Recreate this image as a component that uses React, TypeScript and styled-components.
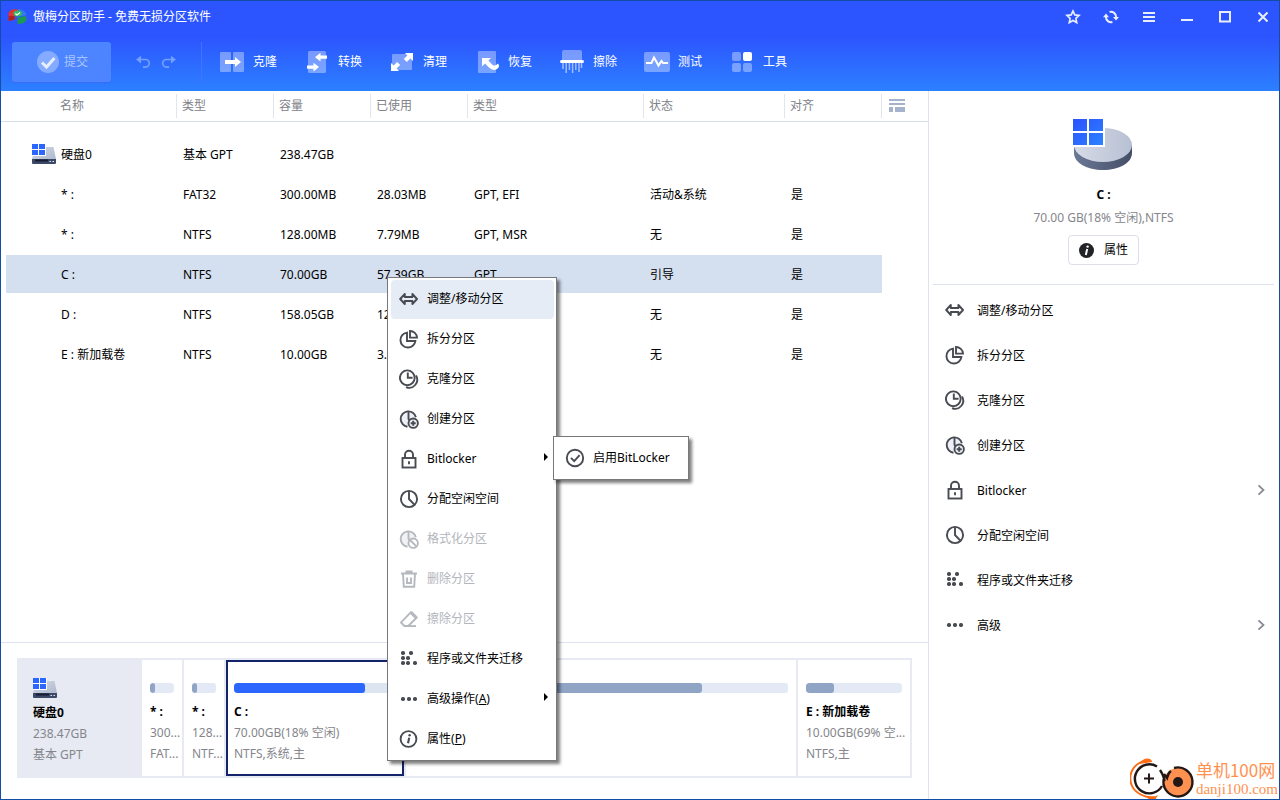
import React from 'react';
import styled, { createGlobalStyle, css } from 'styled-components';

const GlobalStyle = createGlobalStyle`
  *, *::before, *::after { box-sizing: border-box; }
  body {
    margin: 0;
    background: #fff;
    color: #000;
    font: 12px/20px 'Noto Sans', 'Noto Sans CJK SC', sans-serif;
  }
  button {
    margin: 0;
    padding: 0;
    border: 0;
    background: none;
    color: inherit;
    font: inherit;
    text-align: left;
  }
  svg { display: block; flex: none; }
  ul { margin: 0; padding: 0; list-style: none; }
`;

/* ---------- window frame ---------- */

const Window = styled.div`
  position: relative;
  display: flex;
  flex-direction: column;
  min-height: 100vh;
  overflow: hidden;
  border: 1px solid #134ea6;
`;

const Header = styled.header`
  color: #fff;
  background: linear-gradient(#2d55ff 0, #2d55ff 36px, #2c80ff 100%);
`;

const TitleBar = styled.div`
  display: flex;
  align-items: center;
  height: 31px;
  padding: 0 1px 0 7px;
`;

const Title = styled.h1`
  flex: 1;
  margin: 0 0 0 6px;
  font-size: 12px;
  font-weight: 400;
`;

const WindowButtons = styled.div`
  display: flex;
  gap: 8px;
`;

const WindowButton = styled.button`
  display: flex;
  align-items: center;
  justify-content: center;
  width: 30px;
  height: 30px;
`;

const Toolbar = styled.nav`
  display: flex;
  align-items: center;
  height: 59px;
  padding: 0 11px;
`;

const SubmitButton = styled.button`
  display: flex;
  align-items: center;
  gap: 5px;
  width: 99px;
  height: 40px;
  padding-left: 25px;
  border-radius: 3px;
  background: #4d84ff;
  color: #aac5ff;
  box-shadow: 0 1px 1px #3b6cf5;
`;

const History = styled.div`
  display: flex;
  gap: 10px;
  padding: 0 24px;
`;

const HistoryButton = styled.button`
  width: 16px;
  height: 16px;
`;

const ToolList = styled.div`
  display: flex;
  align-items: center;
  height: 40px;
  padding-left: 17px;
  border-left: 1px solid #3f74ff;
`;

const ToolButton = styled.button`
  display: flex;
  align-items: center;
  gap: 8px;
  width: 85px;
  height: 40px;
`;

const Body = styled.div`
  display: grid;
  flex: 1;
  grid-template-columns: minmax(0, 1fr) 351px;
`;

/* ---------- partition table ---------- */

const Main = styled.main`
  display: flex;
  flex-direction: column;
`;

const TableArea = styled.div`
  flex: 1;
`;

const Table = styled.table`
  width: 100%;
  table-layout: fixed;
  border-spacing: 0;

  tbody::before {
    content: '';
    display: block;
    height: 12px;
  }
`;

const Col = styled.col<{ $width?: number }>`
  ${(p) => p.$width && `width: ${p.$width}px;`}
`;

const HeadCell = styled.th`
  height: 31px;
  padding: 0 0 1px;
  border-bottom: 1px solid #d8dfea;
  color: #808289;
  font-weight: 400;
  text-align: left;
`;

const HeadLabel = styled.div<{ $indent: number }>`
  height: 24px;
  padding-left: ${(p) => p.$indent}px;
  border-right: 1px solid #e1e5f0;
  line-height: 24px;
`;

const ColumnsButton = styled.button`
  display: flex;
  align-items: center;
  height: 24px;
  padding-left: 7px;
`;

const Row = styled.tr<{ $selected?: boolean }>`
  td:not(:last-child) {
    background: ${(p) => (p.$selected ? '#d4dfef' : 'transparent')};
    background-clip: padding-box;
  }
`;

const Cell = styled.td`
  height: 40px;
  padding: 2px 0 0 6px;
  border: 0 solid transparent;
  border-width: 1px 0;
  white-space: nowrap;

  &:first-child { border-left-width: 5px; padding-left: 26px; }
`;

const NameBox = styled.div`
  display: flex;
  align-items: center;
  gap: 5px;
`;

const IconSlot = styled.span`
  width: 24px;
  margin-bottom: 2px;
`;

/* ---------- disk map ---------- */

const DiskArea = styled.section`
  padding: 15px 16px 21px;
  border-top: 1px solid #dfe3f0;
`;

const DiskMap = styled.div`
  display: flex;
  height: 120px;
  padding: 2px;
  background: #e7eaf2;
`;

const DiskInfo = styled.div`
  display: flex;
  flex-direction: column;
  align-items: flex-start;
  width: 123px;
  padding: 18px 14px 0;

  svg { margin-bottom: 4px; }
`;

const Partitions = styled.div`
  display: grid;
  flex: 1;
  grid-template-columns: 40px 40px 178fr 390fr 112fr;
  gap: 2px;
`;

const Partition = styled.button<{ $selected?: boolean }>`
  display: flex;
  flex-direction: column;
  min-width: 0;
  padding: 23px 0 0 8px;
  background: #fff;
  box-shadow: ${(p) => (p.$selected ? 'inset 0 0 0 2px #14246b' : 'none')};
`;

const Usage = styled.span<{ $selected?: boolean }>`
  display: block;
  align-self: stretch;
  height: 10px;
  margin: 0 8px 8px 0;
  overflow: hidden;
  border-radius: 3px;
  background: ${(p) => (p.$selected ? '#dde5f1' : '#e4eaf5')};
`;

const UsageFill = styled.span<{ $selected?: boolean }>`
  display: block;
  height: 10px;
  border-radius: 3px;
  background: ${(p) => (p.$selected ? '#2a66ff' : '#90a5c6')};
`;

const line = css`
  display: block;
  line-height: 21px;
  white-space: nowrap;
`;

const BoldLine = styled.strong`
  ${line}
`;

const MutedLine = styled.span`
  ${line}
  color: #84868c;
`;

/* ---------- side panel ---------- */

const Side = styled.aside`
  padding: 0 5px 0 4px;
  border-left: 1px solid #dfe3f0;
`;

const Summary = styled.section`
  display: flex;
  flex-direction: column;
  align-items: center;
  height: 194px;
  padding-top: 28px;
  border-bottom: 1px solid #dfe3f0;
`;

const SummaryName = styled.strong`
  margin-top: 12px;
  line-height: 23px;
`;

const SummaryText = styled.span`
  color: #84868c;
  line-height: 23px;
`;

const PropertiesButton = styled.button`
  display: flex;
  align-items: center;
  gap: 10px;
  height: 30px;
  margin-top: 6px;
  padding: 0 10px;
  border: 1px solid #dcdfea;
  border-radius: 4px;
`;

const SideList = styled.ul`
  padding: 3px 0;
`;

const Label = styled.span`
  flex: 1;
`;

const SideItem = styled.button`
  display: flex;
  align-items: center;
  gap: 12px;
  width: 100%;
  height: 44px;
  margin-bottom: 1px;
  padding: 0 7px 0 12px;

  ${Label} { padding-top: 2px; }
`;

/* ---------- context menu ---------- */

const popup = css`
  position: absolute;
  border: 1px solid #77787c;
  background: #fff;
  box-shadow: 3px 3px 3px rgba(0, 0, 0, 0.5);
`;

const ContextMenu = styled.ul`
  ${popup}
  top: 276px;
  left: 386px;
  width: 170px;
  padding: 1px 2px 1px 3px;
`;

const MenuRow = styled.li`
  position: relative;
`;

const MenuItem = styled.button<{ $active?: boolean }>`
  display: flex;
  align-items: center;
  gap: 8px;
  width: 100%;
  height: 39px;
  margin-top: 1px;
  padding: 0 5px 2px 8px;
  border-radius: 4px;
  background: ${(p) => (p.$active ? '#e5ecf6' : 'transparent')};

  &:disabled { color: #b2b5bc; }
`;

const SubMenu = styled.ul`
  ${popup}
  top: -4px;
  left: 162px;
  width: 136px;
  padding: 1px 2px 1px 3px;
`;

/* ---------- watermark ---------- */

const Watermark = styled.div`
  position: absolute;
  right: 1px;
  bottom: -1px;
  display: flex;
  align-items: center;
  color: #ff9150;
`;

const WatermarkName = styled.div`
  font: 17px/20px 'Noto Sans CJK SC', sans-serif;
`;

const WatermarkUrl = styled.div`
  font: 15px/18px 'Liberation Serif', serif;
`;

/* ---------- icons ---------- */

const INK = '#484b52';
const FADED = '#b5b8bf';

type IconName =
  | 'resize' | 'split' | 'clone' | 'create' | 'lock' | 'allocate' | 'format'
  | 'trash' | 'eraser' | 'apps' | 'more' | 'info' | 'check';

function dots(points: number[][], color: string) {
  return points.map(([x, y]) => (
    <rect key={`${x}-${y}`} x={x} y={y} width="4" height="4" rx="1.7" fill={color} stroke="none" />
  ));
}

function MenuIcon({ name, color = INK }: { name: IconName; color?: string }) {
  const shapes: Record<IconName, React.ReactNode> = {
    resize: <path d="M5.8 5 1.2 10l4.6 5v-3h7.6v3l4.6-5-4.6-5v3H5.8z" strokeLinejoin="round" />,
    split: (
      <>
        <path d="M8 3.6a7.5 7.5 0 1 0 8.4 8.4H8z" />
        <path d="M11 2v6.6h7A7 7 0 0 0 11 2z" />
      </>
    ),
    clone: (
      <>
        <circle cx="8.3" cy="8.8" r="7.4" />
        <path d="M8.8 3.5v5.3h4.8" />
        <path d="M17 6.6a8 8 0 0 1-10 11.5" />
      </>
    ),
    create: (
      <>
        <path d="M16.9 8.3a7.7 7.7 0 1 0-8.4 9.4" fill="#edf0f7" />
        <path d="M9.5 2.2v7.6l1.6 1.7" />
        <circle cx="14.2" cy="14.2" r="4.7" fill="#edf0f7" />
        <path d="M14.2 11.7v5M11.7 14.2h5" />
      </>
    ),
    lock: (
      <>
        <rect x="3.5" y="9" width="13" height="9.5" />
        <path d="M6 9V5.7a4 4 0 0 1 8 0V9M10 12.3v3" />
      </>
    ),
    allocate: (
      <>
        <circle cx="10" cy="10" r="8.1" />
        <path d="M10 2.2V10l5.4 5.6" />
      </>
    ),
    format: (
      <>
        <path d="M16.9 8.3a7.7 7.7 0 1 0-8.4 9.4" fill="#f1f2f5" />
        <path d="M9.5 2.2v7.6l1.6 1.7" />
        <circle cx="14.2" cy="14.2" r="4.7" fill="#fff" />
        <path d="m11 11 6.4 6.4" />
      </>
    ),
    trash: <path d="M2 4.5h16M6.5 2.5h7M4 5l.8 12.8h10.4L16 5M8 8.5V14h4V8.5" />,
    eraser: (
      <>
        <path d="M12 3.2 17.6 8.8 9.2 17H5.4L2 13.4z" />
        <path d="M9.2 17.1H17" />
        <path d="m12.2 3.6 5.2 5.2" strokeWidth="3.2" />
      </>
    ),
    apps: dots([[2, 2], [10, 2], [2, 7], [7, 7], [2, 12], [7, 12], [14, 12]], color),
    more: dots([[2, 8], [8, 8], [14, 8]], color),
    info: (
      <>
        <circle cx="9.5" cy="10" r="7.9" />
        <path d="m10.2 8.8-1.2 5.4" strokeWidth="2.1" />
        <circle cx="10.6" cy="6.2" r="1.2" fill={color} stroke="none" />
      </>
    ),
    check: (
      <>
        <circle cx="10" cy="10" r="8.2" />
        <path d="m6 9.8 3.2 3.4 5.4-6" />
      </>
    ),
  };
  return (
    <svg width="20" height="20" viewBox="0 0 20 20" fill="none" stroke={color} strokeWidth="1.9" aria-hidden="true">
      {shapes[name]}
    </svg>
  );
}

const Chevron = () => (
  <svg width="12" height="14" viewBox="0 0 12 14" fill="none" stroke="#888b94" strokeWidth="1.8">
    <path d="m3.5 2.3 5 4.7-5 4.7" />
  </svg>
);

const SubArrow = () => (
  <svg width="5" height="12" viewBox="0 0 5 12"><path d="M0 0v8l4-4z" fill="#000" /></svg>
);

const AppLogo = () => (
  <svg width="19" height="17" viewBox="0 0 19 17">
    <path d="M9.5 1.5C4 .8.5 3 .5 6.500l.3 6.500 6-1.500V8L11 6.500z" fill="#e2322f" />
    <path d="M.6 8v5l6.200-1.600V8z" fill="#b5201f" />
    <path d="M10 1.300c4.500 0 8 2.200 8.300 6L13 8.200 9 5z" fill="#2f7de8" />
    <path d="M9.500 9.500 18.300 8v4.500c-2 2.500-5 3.600-8.800 3.500z" fill="#1c9a52" />
    <ellipse cx="9.6" cy="5.6" rx="4.3" ry="3" fill="#35b764" />
    <path d="m7.3 5.5 1.7 1.5 3-2.5" stroke="#fff" strokeWidth="1.2" fill="none" />
  </svg>
);

const DiskIcon = ({ id }: { id: string }) => (
  <svg width="24" height="20" viewBox="0 0 24 20">
    <defs>
      <linearGradient id={id} x1="0" y1="0" x2="1" y2="1">
        <stop offset="0" stopColor="#d5dae6" />
        <stop offset="1" stopColor="#aeb8cd" />
      </linearGradient>
    </defs>
    <path d="M3 3h18.5L24 15H0z" fill={`url(#${id})`} />
    <path d="M0 15h24v4q0 1-1 1H1q-1 0-1-1z" fill="#3b4866" />
    <path d="M3 16.5h13" stroke="#161d30" strokeWidth="2" />
    <path d="M17.5 17.5H19M20.5 17.5H22" stroke="#dfe6f5" />
    <path d="M0 0h14v12H0z" fill="#fff" />
    <path d="M0 0h6v5H0zM7 0h6v5H7zM0 6h6v5H0zM7 6h6v5H7z" fill="#2a66ff" />
  </svg>
);

const VolumeIcon = () => (
  <svg width="62" height="52" viewBox="0 0 62 52">
    <defs>
      <linearGradient id="volumeTop">
        <stop offset="0" stopColor="#d6dbe7" />
        <stop offset="1" stopColor="#b7c0d3" />
      </linearGradient>
      <linearGradient id="volumeSide">
        <stop offset="0" stopColor="#6b7896" />
        <stop offset="1" stopColor="#454e66" />
      </linearGradient>
      <linearGradient id="volumeTiles" x1="0" y1="0" x2="1" y2="1">
        <stop offset="0" stopColor="#2c52ff" />
        <stop offset="1" stopColor="#2b83ff" />
      </linearGradient>
    </defs>
    <path d="M1 26v8c0 10 13 17 29 17s29-7 29-17v-8z" fill="url(#volumeSide)" />
    <ellipse cx="30" cy="26" rx="29" ry="17" fill="url(#volumeTop)" />
    <path d="M0 0h32v28H0z" fill="#fff" />
    <path d="M0 0h14v12H0zM16 0h14v12H16zM0 14h14v12H0zM16 14h14v12H16z" fill="url(#volumeTiles)" />
  </svg>
);

const PANE = 'rgba(255,255,255,.36)';

const toolIcons: Record<string, React.ReactNode> = {
  clone: (
    <>
      <rect x="1" y="4" width="11" height="20" rx="1.2" fill={PANE} />
      <rect x="14" y="4" width="11" height="20" rx="1.2" fill={PANE} />
      <path d="M6 12h10V9l6 5-6 5v-3H6z" fill="#fff" />
    </>
  ),
  convert: (
    <>
      <rect x="4" y="3" width="18" height="22" rx="1.5" fill={PANE} />
      <path d="M23 7.5h-6.5V4.8L11 9.2l5.5 4.4v-2.8H23zM3 17.4h6.5v-2.7l5.5 4.400-5.500 4.400v-2.800H3z" fill="#fff" />
    </>
  ),
  clean: (
    <>
      <rect x="3" y="6" width="20" height="16" rx="1" fill={PANE} />
      <path d="M16 5h8v8l-2.6-2.6-3.6 3.6-3-3 3.6-3.6zM2 15l2.6 2.6L8.2 14l3 3-3.6 3.6L10 23H2z" fill="#fff" />
    </>
  ),
  restore: (
    <>
      <rect x="4" y="3" width="18" height="22" rx="1" fill={PANE} />
      <path d="M8 10h9l-2.6 2.6 4.2 4.4q2.6 1.5 5.4-1.5 2.5 3-1 5.5-4 2.5-8-1.5l-4-4L8 18.5z" fill="#fff" />
    </>
  ),
  wipe: (
    <>
      <path d="M3 12V4q0-2 2-2h16q2 0 2 2v8z" fill={PANE} />
      <rect x="1" y="12" width="24" height="3" rx="1.5" fill="#fff" />
      <path d="M4 15v6M7.200 15v10M10.400 15v7M13.600 15v10M16.800 15v7M20 15v9M22.500 15v5" stroke="rgba(255,255,255,.55)" strokeWidth="1.5" />
    </>
  ),
  test: (
    <>
      <rect x="0" y="4" width="26" height="20" rx="2" fill={PANE} />
      <path d="M2 15h5.500L10 9.500l4.500 8 3-4.500 1.500 2h5" stroke="#fff" strokeWidth="2" fill="none" />
    </>
  ),
  tools: (
    <>
      <rect x="3" y="4" width="9" height="9" rx="2" fill={PANE} />
      <rect x="14" y="4" width="9" height="9" rx="2" fill="#fff" />
      <rect x="3" y="15" width="9" height="9" rx="2" fill={PANE} />
      <rect x="14" y="15" width="9" height="9" rx="2" fill={PANE} />
    </>
  ),
};

const HistoryIcon = ({ redo }: { redo?: boolean }) => (
  <svg width="16" height="16" viewBox="0 0 16 16">
    <g transform={redo ? 'matrix(-1 0 0 1 16 0)' : undefined}>
      <path d="M5 5.5h5.500a3.800 3.800 0 0 1 0 7.600H8" stroke="#759fff" strokeWidth="1.7" fill="none" />
      <path d="M6 1.800v7.600L1 5.600z" fill="#759fff" />
    </g>
  </svg>
);

const windowIcons: [string, React.ReactNode][] = [
  ['收藏', <path key="i" d="m8 2 1.800 3.900 4.200.5-3.100 2.900.8 4.200L8 11.400l-3.700 2.100.8-4.200L2 6.400l4.200-.5z" strokeWidth="1.7" />],
  ['刷新', (
    <g key="i">
      <path d="M6.600 3a5.200 5.200 0 0 1 6.500 5M9.400 13a5.200 5.200 0 0 1-6.500-5" />
      <path d="M10 8h6l-3 3.600zM0 8.200h6L3 4.600z" fill="#e8eeff" stroke="none" />
    </g>
  )],
  ['菜单', <path key="i" d="M2 4h12M2 8h12M2 12h12" />],
  ['最小化', <path key="i" d="M2 11h12" />],
  ['最大化', <rect key="i" x="3" y="3" width="10" height="9.500" />],
  ['关闭', <path key="i" d="m3.500 3.500 9 9M12.500 3.500l-9 9" />],
];

const WatermarkLogo = () => (
  <svg width="66" height="42" viewBox="0 0 66 42">
    <path d="M20 3A17.500 17.500 0 0 0 9 35.500q6 4 16 4" fill="none" stroke="#ff6c12" strokeWidth="2" />
    <path d="M9 6q3-5 8-5.500 5 0 5 3.500zM15 38q9 2 13-1l-3 5h-5z" fill="#ff6c12" />
    <path d="M27 8.500A14.500 14.500 0 1 0 32 28" fill="none" stroke="#231815" strokeWidth="2.4" />
    <path d="M19 15.500v10M14 20.500h10" stroke="#231815" strokeWidth="2" />
    <circle cx="48" cy="24" r="14" fill="#ff9150" />
    <path d="M44 10a14.500 14.500 0 1 1-10 10M30 12q4 6 4.500 11M34 16l3 4q1-5 4-7" fill="none" stroke="#231815" strokeWidth="2.4" />
    <circle cx="48" cy="24" r="5" fill="#231815" />
  </svg>
);

/* ---------- data ---------- */

const tools: [string, string][] = [
  ['clone', '克隆'], ['convert', '转换'], ['clean', '清理'], ['restore', '恢复'],
  ['wipe', '擦除'], ['test', '测试'], ['tools', '工具'],
];

const columns: { label: string; width: number }[] = [
  { label: '名称', width: 176 },
  { label: '类型', width: 97 },
  { label: '容量', width: 97 },
  { label: '已使用', width: 97 },
  { label: '类型', width: 176 },
  { label: '状态', width: 141 },
  { label: '对齐', width: 97 },
];

const rows: string[][] = [
  ['硬盘0', '基本 GPT', '238.47GB', '', '', '', ''],
  ['* :', 'FAT32', '300.00MB', '28.03MB', 'GPT, EFI', '活动&系统', '是'],
  ['* :', 'NTFS', '128.00MB', '7.79MB', 'GPT, MSR', '无', '是'],
  ['C :', 'NTFS', '70.00GB', '57.39GB', 'GPT', '引导', '是'],
  ['D :', 'NTFS', '158.05GB', '121.51GB', 'GPT', '无', '是'],
  ['E : 新加载卷', 'NTFS', '10.00GB', '3.10GB', 'GPT', '无', '是'],
];

const partitions: { name: string; size?: string; kind?: string; used: string; selected?: boolean }[] = [
  { name: '* :', size: '300...', kind: 'FAT...', used: '22%' },
  { name: '* :', size: '128...', kind: 'NTF...', used: '22%' },
  { name: 'C :', size: '70.00GB(18% 空闲)', kind: 'NTFS,系统,主', used: '81%', selected: true },
  { name: 'D :', used: '77%' },
  { name: 'E : 新加载卷', size: '10.00GB(69% 空...', kind: 'NTFS,主', used: '29%' },
];

const sideItems: { icon: IconName; label: string; more?: boolean }[] = [
  { icon: 'resize', label: '调整/移动分区' },
  { icon: 'split', label: '拆分分区' },
  { icon: 'clone', label: '克隆分区' },
  { icon: 'create', label: '创建分区' },
  { icon: 'lock', label: 'Bitlocker', more: true },
  { icon: 'allocate', label: '分配空闲空间' },
  { icon: 'apps', label: '程序或文件夹迁移' },
  { icon: 'more', label: '高级', more: true },
];

const menuItems: {
  icon: IconName; label: string; accel?: string; disabled?: boolean; arrow?: boolean; sub?: string;
}[] = [
  { icon: 'resize', label: '调整/移动分区' },
  { icon: 'split', label: '拆分分区' },
  { icon: 'clone', label: '克隆分区' },
  { icon: 'create', label: '创建分区' },
  { icon: 'lock', label: 'Bitlocker', arrow: true, sub: '启用BitLocker' },
  { icon: 'allocate', label: '分配空闲空间' },
  { icon: 'format', label: '格式化分区', disabled: true },
  { icon: 'trash', label: '删除分区', disabled: true },
  { icon: 'eraser', label: '擦除分区', disabled: true },
  { icon: 'apps', label: '程序或文件夹迁移' },
  { icon: 'more', label: '高级操作', accel: 'A', arrow: true },
  { icon: 'info', label: '属性', accel: 'P' },
];

/* ---------- page ---------- */

export default function App() {
  return (
    <>
      <GlobalStyle />
      <Window>
        <Header>
          <TitleBar>
            <AppLogo />
            <Title>傲梅分区助手 - 免费无损分区软件</Title>
            <WindowButtons>
              {windowIcons.map(([label, shape]) => (
                <WindowButton key={label} aria-label={label}>
                  <svg width="16" height="16" viewBox="0 0 16 16" fill="none" stroke="#e8eeff" strokeWidth="2">
                    {shape}
                  </svg>
                </WindowButton>
              ))}
            </WindowButtons>
          </TitleBar>
          <Toolbar>
            <SubmitButton disabled>
              <svg width="22" height="22" viewBox="0 0 22 22">
                <circle cx="11" cy="11" r="11" fill="#84abff" />
                <path d="m5 11.500 4.500 4.500 8-9" stroke="#e6eeff" strokeWidth="3" fill="none" />
              </svg>
              提交
            </SubmitButton>
            <History>
              <HistoryButton aria-label="撤销" disabled><HistoryIcon /></HistoryButton>
              <HistoryButton aria-label="重做" disabled><HistoryIcon redo /></HistoryButton>
            </History>
            <ToolList>
              {tools.map(([icon, label]) => (
                <ToolButton key={icon}>
                  <svg width="26" height="28" viewBox="0 0 26 28">{toolIcons[icon]}</svg>
                  {label}
                </ToolButton>
              ))}
            </ToolList>
          </Toolbar>
        </Header>

        <Body>
          <Main>
            <TableArea>
              <Table>
                <colgroup>
                  {columns.map((c, i) => <Col key={i} $width={c.width} />)}
                  <Col />
                </colgroup>
                <thead>
                  <tr>
                    {columns.map((c, i) => (
                      <HeadCell key={i}>
                        <HeadLabel $indent={i === 0 ? 59 : 5}>{c.label}</HeadLabel>
                      </HeadCell>
                    ))}
                    <HeadCell>
                      <ColumnsButton aria-label="列设置">
                        <svg width="16" height="14" viewBox="0 0 16 14" fill="#a5b4cc">
                          <path d="M0 0h16v2H0zM0 4h16v2H0zM0 8h4v5H0zM6 8h10v5H6z" />
                        </svg>
                      </ColumnsButton>
                    </HeadCell>
                  </tr>
                </thead>
                <tbody>
                  {rows.map((cells, r) => (
                    <Row key={r} $selected={r === 3}>
                      {cells.map((text, c) => (
                        <Cell key={c}>
                          {c === 0 ? (
                            <NameBox>
                              <IconSlot>{r === 0 && <DiskIcon id="tableDisk" />}</IconSlot>
                              {text}
                            </NameBox>
                          ) : text}
                        </Cell>
                      ))}
                      <Cell />
                    </Row>
                  ))}
                </tbody>
              </Table>
            </TableArea>

            <DiskArea>
              <DiskMap>
                <DiskInfo>
                  <DiskIcon id="mapDisk" />
                  <BoldLine>硬盘0</BoldLine>
                  <MutedLine>238.47GB</MutedLine>
                  <MutedLine>基本 GPT</MutedLine>
                </DiskInfo>
                <Partitions>
                  {partitions.map((p, i) => (
                    <Partition key={i} $selected={p.selected}>
                      <Usage $selected={p.selected}>
                        <UsageFill $selected={p.selected} style={{ width: p.used }} />
                      </Usage>
                      <BoldLine>{p.name}</BoldLine>
                      {p.size && <MutedLine>{p.size}</MutedLine>}
                      {p.kind && <MutedLine>{p.kind}</MutedLine>}
                    </Partition>
                  ))}
                </Partitions>
              </DiskMap>
            </DiskArea>
          </Main>

          <Side>
            <Summary>
              <VolumeIcon />
              <SummaryName>C :</SummaryName>
              <SummaryText>70.00 GB(18% 空闲),NTFS</SummaryText>
              <PropertiesButton>
                <svg width="15" height="15" viewBox="0 0 15 15">
                  <circle cx="7.5" cy="7.5" r="7.5" fill="#222327" />
                  <path d="m8.200 6-1.400 6" stroke="#fff" strokeWidth="2" />
                  <circle cx="8.6" cy="3.6" r="1.2" fill="#fff" />
                </svg>
                属性
              </PropertiesButton>
            </Summary>
            <SideList>
              {sideItems.map((item) => (
                <li key={item.label}>
                  <SideItem>
                    <MenuIcon name={item.icon} />
                    <Label>{item.label}</Label>
                    {item.more && <Chevron />}
                  </SideItem>
                </li>
              ))}
            </SideList>
          </Side>
        </Body>

        <ContextMenu>
          {menuItems.map((item, i) => (
            <MenuRow key={item.label}>
              <MenuItem $active={i === 0} disabled={item.disabled}>
                <MenuIcon name={item.icon} color={item.disabled ? FADED : INK} />
                <Label>
                  {item.label}
                  {item.accel && <>(<u>{item.accel}</u>)</>}
                </Label>
                {item.arrow && <SubArrow />}
              </MenuItem>
              {item.sub && (
                <SubMenu>
                  <MenuRow>
                    <MenuItem>
                      <MenuIcon name="check" />
                      <Label>{item.sub}</Label>
                    </MenuItem>
                  </MenuRow>
                </SubMenu>
              )}
            </MenuRow>
          ))}
        </ContextMenu>

        <Watermark>
          <WatermarkLogo />
          <div>
            <WatermarkName>单机100网</WatermarkName>
            <WatermarkUrl>danji100.com</WatermarkUrl>
          </div>
        </Watermark>
      </Window>
    </>
  );
}
